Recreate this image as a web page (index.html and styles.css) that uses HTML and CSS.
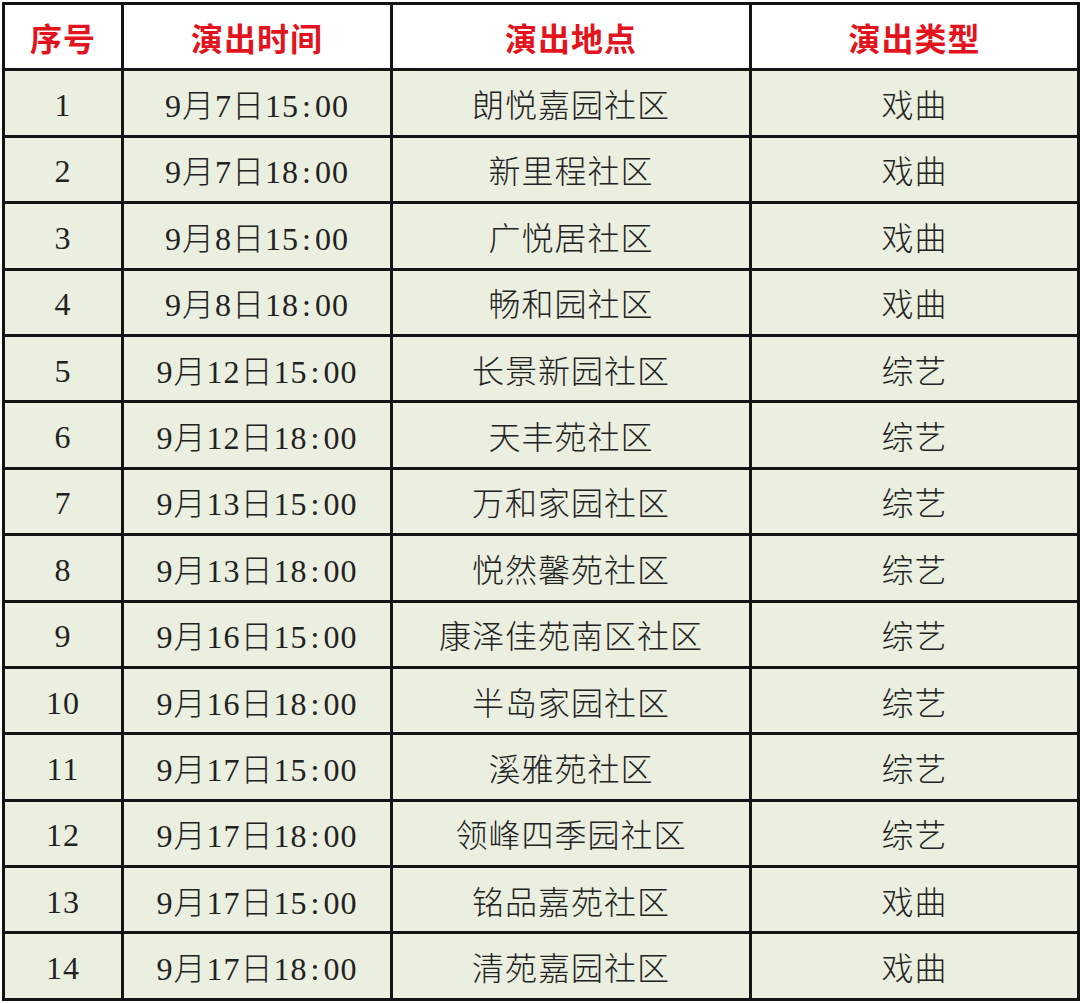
FILE: index.html
```html
<!DOCTYPE html>
<html lang="zh-CN">
<head>
<meta charset="utf-8">
<link rel="stylesheet" href="styles.css">
</head>
<body>
<table class="schedule">
  <colgroup>
    <col class="c-no"><col class="c-time"><col class="c-place"><col class="c-type">
  </colgroup>
  <thead>
    <tr><th>序号</th><th>演出时间</th><th>演出地点</th><th>演出类型</th></tr>
  </thead>
  <tbody>
    <tr><td class="num">1</td><td>9月7日15<span class="colon">:</span>00</td><td>朗悦嘉园社区</td><td>戏曲</td></tr>
    <tr><td class="num">2</td><td>9月7日18<span class="colon">:</span>00</td><td>新里程社区</td><td>戏曲</td></tr>
    <tr><td class="num">3</td><td>9月8日15<span class="colon">:</span>00</td><td>广悦居社区</td><td>戏曲</td></tr>
    <tr><td class="num">4</td><td>9月8日18<span class="colon">:</span>00</td><td>畅和园社区</td><td>戏曲</td></tr>
    <tr><td class="num">5</td><td>9月12日15<span class="colon">:</span>00</td><td>长景新园社区</td><td>综艺</td></tr>
    <tr><td class="num">6</td><td>9月12日18<span class="colon">:</span>00</td><td>天丰苑社区</td><td>综艺</td></tr>
    <tr><td class="num">7</td><td>9月13日15<span class="colon">:</span>00</td><td>万和家园社区</td><td>综艺</td></tr>
    <tr><td class="num">8</td><td>9月13日18<span class="colon">:</span>00</td><td>悦然馨苑社区</td><td>综艺</td></tr>
    <tr><td class="num">9</td><td>9月16日15<span class="colon">:</span>00</td><td>康泽佳苑南区社区</td><td>综艺</td></tr>
    <tr><td class="num">10</td><td>9月16日18<span class="colon">:</span>00</td><td>半岛家园社区</td><td>综艺</td></tr>
    <tr><td class="num">11</td><td>9月17日15<span class="colon">:</span>00</td><td>溪雅苑社区</td><td>综艺</td></tr>
    <tr><td class="num">12</td><td>9月17日18<span class="colon">:</span>00</td><td>领峰四季园社区</td><td>综艺</td></tr>
    <tr><td class="num">13</td><td>9月17日15<span class="colon">:</span>00</td><td>铭品嘉苑社区</td><td>戏曲</td></tr>
    <tr><td class="num">14</td><td>9月17日18<span class="colon">:</span>00</td><td>清苑嘉园社区</td><td>戏曲</td></tr>
  </tbody>
</table>
</body>
</html>
```
FILE: styles.css
```css
html, body {
  margin: 0;
  padding: 0;
  background: #ffffff;
}

.schedule {
  margin: 2px 0 0 2px;
  width: 1075px;
  border-collapse: collapse;
  table-layout: fixed;
  border: 3px solid #141414;
}

.c-no { width: 119px; }
.c-time { width: 269px; }
.c-place { width: 359px; }
.c-type { width: 328px; }

.schedule tr {
  height: 66.4px;
}

.schedule th,
.schedule td {
  border: 3px solid #141414;
  padding: 0;
  text-align: center;
  vertical-align: middle;
  white-space: nowrap;
}

.schedule th {
  background: #ffffff;
  color: #e3141d;
  font-family: "Noto Sans CJK SC", sans-serif;
  font-weight: 700;
  font-size: 32px;
  letter-spacing: 1px;
}

.schedule td {
  background: #ebefe0;
  color: #222222;
  font-family: "Liberation Serif", "Noto Sans CJK SC", serif;
  font-weight: 300;
  font-size: 32px;
  letter-spacing: 1px;
}

.schedule td.num {
  padding-top: 5px;
}

.colon {
  display: inline-block;
  width: 0.5em;
  text-align: center;
}
```
